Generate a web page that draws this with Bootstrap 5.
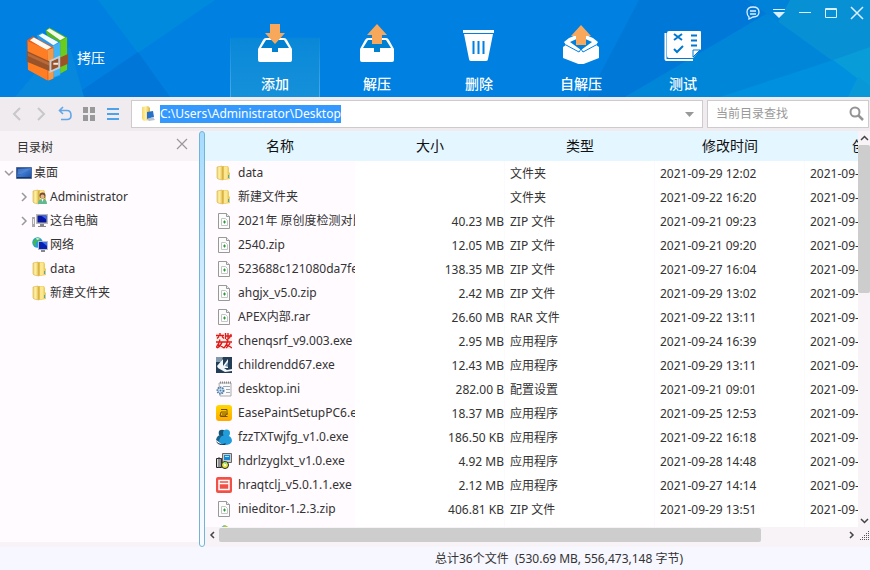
<!DOCTYPE html>
<html lang="zh-CN">
<head>
<meta charset="utf-8">
<meta name="viewport" content="width=device-width, initial-scale=1">
<title>拷压</title>
<link href="https://cdn.jsdelivr.net/npm/bootstrap@5.3.0/dist/css/bootstrap.min.css" rel="stylesheet">
<style>
body{font-family:"Noto Sans","Noto Sans CJK SC",sans-serif;font-size:12px;line-height:24px;color:#333;background:#f7f7ff}
svg{display:block;flex:none}
button{border:0;background:none;padding:0;color:inherit}
.topbar{height:97px;background:#0080e0;color:#fff}
.facets{z-index:0}
.brand{width:230px;padding:26px 0 0 26px;z-index:1}
.brand-name{font-size:14px;line-height:24px;padding-top:20px}
.tools{gap:12px;padding-top:19px;z-index:1}
.tool{width:90px;height:78px;font-size:14px;font-weight:500;line-height:20px;border:solid transparent;border-width:0 1px}
.tool svg{margin:0 auto 10px}
.tool.current{background:linear-gradient(transparent 18px,#0a88d8 20px,#1590da);border-image:linear-gradient(transparent 18px,#45acec) 1}
.wincontrols{gap:12px;padding:6px 6px 0 0;z-index:1;color:#dcefff}
.toolbar{background:#efebef;padding:3px 1px 3px 10px}
.navicons{width:121px;gap:10px}
.field{height:28px;background:#fff;border:1px solid #cecbce}
.field input{border:0;outline:0;background:none;min-width:0;line-height:18px;padding:0;font-size:12px;color:#333}
.address input::selection{background:#3399ff;color:#fff}
.search{width:162px}
.search input::placeholder{color:#999;opacity:1}
.tree{width:199px;background:#fffbff;border-bottom:5px solid #f7f3f7}
.treehead{height:30px;background:#f7f3f7;padding:4px 11px 0 17px}
.treehead button{margin-bottom:8px}
.tree ul{padding:0;margin:0;list-style:none}
.node{height:24px;gap:2px;padding-left:4px}
.node.child{padding-left:20px}
.node .twist{width:10px;height:10px}
.splitter{width:6px;border:1px solid #74b3d8;border-radius:3px;background:linear-gradient(#a5dcff,#d6eeff 40%,#f7fbff)}
.files{background:#fff}
.files table{width:900px;table-layout:fixed;border-collapse:separate;border-spacing:0}
.files th{height:30px;background:#e4f6ff;font-size:14px;font-weight:400;text-align:center;padding:0;color:#111}
.files td{height:24px;line-height:22px;padding:2px 5px 0;white-space:nowrap;overflow:hidden;border-right:1px solid #fcfafc}
.files td:first-child{background:#fffbff;padding:0 0 0 11px;border:0}
.files td:nth-child(2){text-align:right;padding-right:0}
.files td div{gap:6px}
.track{background:#f7f3f7;color:#444}
.vbar{width:12px}
.thumb{background:#cdcdcd;border-radius:2px}
.vbar .thumb{height:148px}
.hbar{height:20px;padding:1px 0 5px 4px}
.hbar .thumb{width:82%}
.status{height:23px;padding-left:50%;line-height:24px;background:#f7f7ff}
</style>
<script src="https://cdn.jsdelivr.net/npm/bootstrap@5.3.0/dist/js/bootstrap.bundle.min.js"></script>
</head>
<body class="d-flex flex-column vh-100 overflow-hidden">
<svg class="position-absolute" width="0" height="0" aria-hidden="true">
<defs>
<linearGradient id="gold"><stop offset="0" stop-color="#f5d66c"/><stop offset=".45" stop-color="#fff0a5"/><stop offset="1" stop-color="#dcb33a"/></linearGradient>
<linearGradient id="scr" x2="1" y2="1"><stop offset="0" stop-color="#173f8f"/><stop offset=".5" stop-color="#3c78cf"/><stop offset="1" stop-color="#1b4c9f"/></linearGradient>
<linearGradient id="amber" x2="0" y2="1"><stop offset="0" stop-color="#ffd800"/><stop offset="1" stop-color="#ffa800"/></linearGradient>
</defs>
<symbol id="folder" viewBox="0 0 16 16"><path d="M1 2l5-1 1 1v13l-5-1-1-1z" fill="url(#gold)" stroke="#d5ae48" stroke-width=".6"/><path d="M6 2l1-1 5 0 1 2v4l1 1v6l-6 1-2-1z" fill="#edcc5c"/><path d="M8 1.500h3.500v12L8 14.500z" fill="#fbe692"/><path d="M6 2l1.500-1v14L6 14z" fill="#d9b347"/><path d="M12.500 10v3" stroke="#36a9e8"/></symbol>
<symbol id="zip" viewBox="0 0 16 16"><path d="M2.500.5h8l3 3v12h-11z" fill="#fcfcfc" stroke="#999"/><path d="M10.500.5v3h3" fill="#eee" stroke="#999"/><path d="M5.500 5.500h4l2 2v5h-6z" fill="#fff" stroke="#c5c5c5"/><path d="M8.500 7.500v3M7 9h3" stroke="#20a030"/></symbol>
<symbol id="desk" viewBox="0 0 16 16"><path d="M.5 2.500h15v11H.5z" fill="url(#scr)" stroke="#526b96"/><path d="M1 12.500h14" stroke="#163565"/><path d="M2 4h12L5 9H2z" fill="#71a6e6" opacity=".4"/></symbol>
<symbol id="user" viewBox="0 0 16 16"><use href="#folder"/><circle cx="10.500" cy="6.500" r="3" fill="#734c32"/><circle cx="10.500" cy="7.500" r="2" fill="#e5b48c"/><path d="M6 15q0-5 4.500-5t4.500 5z" fill="#62b893"/><path d="M9.500 10h2l-1 3z" fill="#fff"/></symbol>
<symbol id="pc" viewBox="0 0 16 16"><path d="M0 4h3v10H0z" fill="#aaa"/><path d="M1 6h1v5H1z" fill="#eee"/><path d="M4 1h12v10H4z" fill="#b8b8b8"/><path d="M5.500 2.500h9v7h-9z" fill="#0716a0"/><path d="M9 2.500h5.500v4z" fill="#3b65ed"/><path d="M8 11h4v2h2v1H6v-1h2z" fill="#888"/></symbol>
<symbol id="net" viewBox="0 0 16 16"><circle cx="5.500" cy="5.500" r="5.200" fill="#269ed3"/><path d="M1 5q3-5 7-4L7 4 4 5v4L1 7z" fill="#43b852"/><path d="M4 1q3 0 4 1L5 3z" fill="#cff3e7"/><path d="M6 4h10v9H6z" fill="#b5bac5"/><path d="M7 5h8v7H7z" fill="#0920b5"/><path d="M10 5h5v4z" fill="#3b6eee"/><path d="M9 13h4v2H9z" fill="#888"/></symbol>
<symbol id="chen" viewBox="0 0 16 16"><path d="M0 0h16v16H0z" fill="#ffeee8"/><path d="M0 2.500h8M4 0v3M1 5.500l2-2M6 3.500l2 2M0 9h8M4 6.500q-1 5-4 8M2 11l6 4M6 9q-1 4-5 6M9 3h7M12 0v6M9.500 0v6M15 1q0 4-5 6M8 9h8M12 7q-1 5-4 8M10 11l6 4M14 10q-1 3-4 5" stroke="#dd1919" stroke-width="1.300" fill="none"/></symbol>
<symbol id="child" viewBox="0 0 16 16"><path d="M0 0h16v16H0z" fill="#233d57"/><path d="M0 0h7L5 5H0z" fill="#8399ac"/><path d="M1 9l6-7v7l5-7v9H8l3 2 5-1v2L9 15l-7-4z" fill="#f2f7fa"/><path d="M9 9l3-4v5z" fill="#6c93b3"/></symbol>
<symbol id="ini" viewBox="0 0 16 16"><path d="M3 2h12v13H4z" fill="#fafafa" stroke="#aaa"/><path d="M4 1.500h11" stroke="#888" stroke-width="2" stroke-dasharray="1 1"/><path d="M7 5.500h7M10 8.500h4M10 11.500h4" stroke="#9ca8b3"/><circle cx="4.500" cy="9.500" r="3" fill="#dceaf4" stroke="#527fab" stroke-width="2" stroke-dasharray="1.500 .7"/><circle cx="4.500" cy="9.500" r="1" fill="#527fab"/></symbol>
<symbol id="ease" viewBox="0 0 16 16"><rect width="16" height="16" rx="3" fill="url(#amber)"/><path d="M5 4.500h6v4L9 11H4l1-4h5M6 9h6M4.500 11.500h7" stroke="#704f08" fill="none"/></symbol>
<symbol id="people" viewBox="0 0 16 16"><circle cx="6" cy="4" r="3.300" fill="#135478"/><path d="M0 11q1-5 5-5l4 5-3 4z" fill="#17628a"/><circle cx="10.500" cy="4" r="3.500" fill="#219ed9"/><path d="M3 12q1-6 7-6 6 1 6 6-1 4-7 4-5-1-6-4z" fill="#229bdc"/><path d="M0 12q4 5 10 2l-1 2q-7 1-9-4z" fill="#123d56"/></symbol>
<symbol id="setup" viewBox="0 0 16 16"><path d="M6.500.5h9v9h-9z" fill="#ccc" stroke="#666"/><path d="M8 2h6v5H8z" fill="#1689d5"/><path d="M9 3h4v1H9z" fill="#a4e5fc"/><path d="M.5 5.500h5v9h-5z" fill="#ddd" stroke="#222"/><path d="M3 4v11M5 5v9" stroke="#444"/><circle cx="9" cy="12" r="3.500" fill="#e5e845" stroke="#222"/><path d="M9 8.500l2 1-2 2z" fill="#4ee0be"/><circle cx="9" cy="12" r="1" fill="#fff"/></symbol>
<symbol id="redwin" viewBox="0 0 16 16"><rect width="16" height="16" rx="2" fill="#f24f47"/><path d="M3 3.500h10v9H3zM3 6.500h10" fill="none" stroke="#fff" stroke-width="1.500"/></symbol>
<symbol id="stack" viewBox="0 0 16 16"><path d="M3 4l5-4 6 4v10H3z" fill="#5fbbd5"/><path d="M6 3l3-3 5 3v3z" fill="#a9c83c"/></symbol>
<symbol id="more" viewBox="0 0 10 10"><path d="M2 1l4 4-4 4" fill="none" stroke="#999" stroke-width="1.500"/></symbol>
<symbol id="tray" viewBox="0 0 36 42"><path d="M9 16h18q2 0 3 2l5 9v11q0 2-2 2H3q-2 0-2-2V27l5-9q1-2 3-2z" fill="#fff"/><path d="M9 18h18l5 8H21v4h-6v-4H4z" fill="#0080d0"/></symbol>
</svg>

<header class="topbar d-flex position-relative flex-shrink-0">
<svg class="facets position-absolute top-0 start-0 w-100 h-100" viewBox="0 0 870 97" preserveAspectRatio="none" aria-hidden="true">
<path d="M98 0l40 53L215 0z" fill="#008ade"/><path d="M138 52L72 97h98z" fill="#0076d8"/><path d="M15 97l35-42 20-8 14 50z" fill="#0788dc"/>
<path d="M639 0h151L625 97h-37z" fill="#0078d8"/><path d="M710 47L790 0h80v97H625z" fill="#0086d8"/><path d="M748 0h122v88z" fill="#0890d5"/><path d="M748 0h42l-12 22z" fill="#0082d8"/><path d="M720 97l113-37 37 28v9z" fill="#0090e0"/><path d="M833 60l37-13v41z" fill="#089cd8"/><path d="M848 97l10-20 12 9v11z" fill="#0898d8"/>
</svg>
<div class="brand d-flex align-items-start position-relative">
<svg class="me-2" width="43" height="56" viewBox="0 0 44 56" aria-hidden="true">
<path d="M20 4l4-3 18 10v33l-7 4z" fill="#55b71b"/><path d="M21 4l3-2 16 9-5 3z" fill="#f5faed"/><path d="M35 15l7-4v33l-7 4z" fill="#6bcc1d"/>
<path d="M11 9l5-3 19 10v34l-8 3z" fill="#2b99e5"/><path d="M13 9l4-2 16 9-5 3z" fill="#f4fbff"/><path d="M27 20l8-4v33l-8 3z" fill="#42b4f3"/>
<path d="M1 14l6-4 21 11v32l-5 2L2 44z" fill="#ec5b1a"/><path d="M4 14l4-3 18 10-5 3z" fill="#fffaf2"/><path d="M2 15l20 9v31L2 44z" fill="#ff7e24"/><path d="M22 24l6-2v31l-5 2z" fill="#f39a49"/>
<path d="M1 25l24 11 18-8v10l-18 8L1 36z" fill="#9a5228"/><path d="M2 27l22 10v3L2 30z" fill="#b96a3b"/><path d="M25 35l9-4v11l-9 4z" fill="none" stroke="#c9ccd0" stroke-width="2"/><path d="M28 38h5" stroke="#eee" stroke-width="2"/>
</svg>
<span class="brand-name">拷压</span>
</div>
<nav class="tools d-flex position-relative">
<button class="tool current" type="button"><svg width="36" height="42" viewBox="0 0 36 42"><use href="#tray"/><path d="M13 2h10v9h5L18 22 8 11h5z" fill="#f7a85a"/></svg>添加</button>
<button class="tool" type="button"><svg width="36" height="42" viewBox="0 0 36 42"><use href="#tray"/><path d="M18 2l10 11h-5v9H13v-9H8z" fill="#f7a85a"/></svg>解压</button>
<button class="tool" type="button"><svg width="36" height="42" viewBox="0 0 36 42"><path d="M2 8h31v3H2zM3 12h29l-5 25q0 2-2 2H10q-2 0-2-2z" fill="#fff"/><path d="M12.500 19v13M17.500 19v13M22.500 19v13" stroke="#0080e0" stroke-width="2"/></svg>删除</button>
<button class="tool" type="button"><svg width="38" height="42" viewBox="0 0 38 42"><path d="M7 16l12-5 12 5 5 4-2 3 3 2v11l-18 7L1 36V25l3-2-2-3z" fill="#fff"/><path d="M19 15l11 5-11 8-11-8z" fill="#0080d8"/><path d="M4 23l13 7 2-3 2 3 13-7" fill="none" stroke="#0080e0"/><path d="M19 3l10 11h-5v9H14v-9H9z" fill="#f7a85a"/></svg>自解压</button>
<button class="tool" type="button"><svg width="38" height="42" viewBox="0 0 38 42"><path d="M1.500 11v26q0 1 1 1H29" fill="none" stroke="#fff" stroke-width="2"/><path d="M5 9h31q1 0 1 1v17l-8 9H5q-2 0-2-2V11q0-2 2-2z" fill="#fff"/><path d="M10 12l8 6M18 12l-8 6M10 27l3 3 6-6M27 13.500h6M27 18.500h6M27 23.500h6" fill="none" stroke="#0078d0" stroke-width="2"/><path d="M29 35v-7h7z" fill="#fff" stroke="#0078d0"/></svg>测试</button>
</nav>
<div class="wincontrols d-flex align-items-start ms-auto position-relative">
<button type="button" aria-label="反馈"><svg width="14" height="14" viewBox="0 0 14 14"><path d="M3 11Q1 9 1 6q0-5 6-5t6 5-6 5l-4 2zM4 5h6M4 8h6" fill="none" stroke="currentColor" stroke-width="1.300"/></svg></button>
<button type="button" aria-label="菜单"><svg width="14" height="14" viewBox="0 0 14 14"><path d="M1 3h12v1H1zM1 6h12l-6 6z" fill="currentColor"/></svg></button>
<button type="button" aria-label="最小化"><svg width="14" height="14" viewBox="0 0 14 14"><path d="M1 6.500h12" stroke="currentColor"/></svg></button>
<button type="button" aria-label="最大化"><svg width="14" height="14" viewBox="0 0 14 14"><path d="M1.500 2.500h11v9h-11zM1 3.500h12" fill="none" stroke="currentColor"/></svg></button>
<button type="button" aria-label="关闭"><svg width="14" height="14" viewBox="0 0 14 14"><path d="M1 1l12 12M13 1L1 13" stroke="currentColor" stroke-width="1.500"/></svg></button>
</div>
</header>

<div class="toolbar d-flex align-items-center flex-shrink-0">
<div class="navicons d-flex align-items-center">
<button type="button" aria-label="后退"><svg width="14" height="16" viewBox="0 0 14 16"><path d="M10 2L4 8l6 6" fill="none" stroke="#c8c8c8" stroke-width="2"/></svg></button>
<button type="button" aria-label="前进"><svg width="14" height="16" viewBox="0 0 14 16"><path d="M4 2l6 6-6 6" fill="none" stroke="#c8c8c8" stroke-width="2"/></svg></button>
<button type="button" aria-label="返回上级"><svg width="14" height="16" viewBox="0 0 14 16"><path d="M5 1L1.500 4.500 5 8M2 4.500h7q4 0 4 5 0 4-4 4H3" fill="none" stroke="#62a5e8" stroke-width="1.600"/></svg></button>
<button type="button" aria-label="图标视图"><svg width="14" height="16" viewBox="0 0 14 16"><path d="M1 1h5v6H1zM8 1h5v6H8zM1 9h5v6H1zM8 9h5v6H8z" fill="#999"/></svg></button>
<button type="button" aria-label="列表视图"><svg width="14" height="16" viewBox="0 0 14 16"><path d="M1 3h12M1 8h12M1 13h12" stroke="#4ba3ec" stroke-width="2"/></svg></button>
</div>
<div class="field address d-flex align-items-center flex-grow-1">
<svg class="ms-2 me-1" width="16" height="16" viewBox="0 0 16 16" aria-hidden="true"><path d="M2 1l6-1 2 2v12l-6 1-2-2z" fill="url(#gold)"/><path d="M7 6l6-1 1 6-7 2z" fill="#2871ca"/><path d="M7 13l6-2 2 3-6 1z" fill="#b8c3d1"/></svg>
<input id="path" class="flex-grow-1" type="text" aria-label="地址" value="C:\Users\Administrator\Desktop">
<button type="button" class="me-2" aria-label="展开地址"><svg width="9" height="6" viewBox="0 0 9 6"><path d="M0 1h9L4.500 6z" fill="#999"/></svg></button>
</div>
<div class="field search d-flex align-items-center ms-1 ps-2 pe-1">
<input class="flex-grow-1" type="text" aria-label="查找" placeholder="当前目录查找">
<button type="button" aria-label="开始查找"><svg width="15" height="16" viewBox="0 0 15 16"><circle cx="6" cy="6" r="4.500" fill="none" stroke="#949494" stroke-width="2"/><path d="M9 9l5 5" stroke="#949494" stroke-width="2.500"/></svg></button>
</div>
</div>

<main class="d-flex flex-grow-1 overflow-hidden">
<aside class="tree flex-shrink-0">
<div class="treehead d-flex align-items-center justify-content-between">目录树<button type="button" aria-label="关闭目录树"><svg width="12" height="12" viewBox="0 0 12 12"><path d="M1 1l10 10M11 1L1 11" stroke="#999" stroke-width="1.200"/></svg></button></div>
<ul>
<li class="node d-flex align-items-center"><button class="twist" type="button" aria-label="折叠"><svg width="10" height="10" viewBox="0 0 10 10"><path d="M1 3l4 4 4-4" fill="none" stroke="#999" stroke-width="1.500"/></svg></button><svg width="16" height="16"><use href="#desk"/></svg><span>桌面</span></li>
<li class="node child d-flex align-items-center"><button class="twist" type="button" aria-label="展开"><svg width="10" height="10"><use href="#more"/></svg></button><svg width="16" height="16"><use href="#user"/></svg><span>Administrator</span></li>
<li class="node child d-flex align-items-center"><button class="twist" type="button" aria-label="展开"><svg width="10" height="10"><use href="#more"/></svg></button><svg width="16" height="16"><use href="#pc"/></svg><span>这台电脑</span></li>
<li class="node child d-flex align-items-center"><i class="twist"></i><svg width="16" height="16"><use href="#net"/></svg><span>网络</span></li>
<li class="node child d-flex align-items-center"><i class="twist"></i><svg width="16" height="16"><use href="#folder"/></svg><span>data</span></li>
<li class="node child d-flex align-items-center"><i class="twist"></i><svg width="16" height="16"><use href="#folder"/></svg><span>新建文件夹</span></li>
</ul>
</aside>
<div class="splitter flex-shrink-0"></div>
<section class="files d-flex flex-column flex-grow-1 overflow-hidden">
<div class="d-flex flex-grow-1 overflow-hidden">
<div class="flex-grow-1 overflow-hidden">
<table>
<thead><tr><th>名称</th><th>大小</th><th>类型</th><th>修改时间</th><th>创建时间</th><th>属性</th></tr></thead>
<tbody>
<tr><td><div class="d-flex align-items-center"><svg width="16" height="16"><use href="#folder"/></svg><span>data</span></div></td><td></td><td>文件夹</td><td>2021-09-29 12:02</td><td>2021-09-29 12:02</td><td></td></tr>
<tr><td><div class="d-flex align-items-center"><svg width="16" height="16"><use href="#folder"/></svg><span>新建文件夹</span></div></td><td></td><td>文件夹</td><td>2021-09-22 16:20</td><td>2021-09-22 16:20</td><td></td></tr>
<tr><td><div class="d-flex align-items-center"><svg width="16" height="16"><use href="#zip"/></svg><span>2021年 原创度检测对比</span></div></td><td>40.23 MB</td><td>ZIP 文件</td><td>2021-09-21 09:23</td><td>2021-09-21 09:23</td><td></td></tr>
<tr><td><div class="d-flex align-items-center"><svg width="16" height="16"><use href="#zip"/></svg><span>2540.zip</span></div></td><td>12.05 MB</td><td>ZIP 文件</td><td>2021-09-21 09:20</td><td>2021-09-21 09:20</td><td></td></tr>
<tr><td><div class="d-flex align-items-center"><svg width="16" height="16"><use href="#zip"/></svg><span>523688c121080da7fe.zip</span></div></td><td>138.35 MB</td><td>ZIP 文件</td><td>2021-09-27 16:04</td><td>2021-09-27 16:04</td><td></td></tr>
<tr><td><div class="d-flex align-items-center"><svg width="16" height="16"><use href="#zip"/></svg><span>ahgjx_v5.0.zip</span></div></td><td>2.42 MB</td><td>ZIP 文件</td><td>2021-09-29 13:02</td><td>2021-09-29 13:02</td><td></td></tr>
<tr><td><div class="d-flex align-items-center"><svg width="16" height="16"><use href="#zip"/></svg><span>APEX内部.rar</span></div></td><td>26.60 MB</td><td>RAR 文件</td><td>2021-09-22 13:11</td><td>2021-09-22 13:11</td><td></td></tr>
<tr><td><div class="d-flex align-items-center"><svg width="16" height="16"><use href="#chen"/></svg><span>chenqsrf_v9.003.exe</span></div></td><td>2.95 MB</td><td>应用程序</td><td>2021-09-24 16:39</td><td>2021-09-24 16:39</td><td></td></tr>
<tr><td><div class="d-flex align-items-center"><svg width="16" height="16"><use href="#child"/></svg><span>childrendd67.exe</span></div></td><td>12.43 MB</td><td>应用程序</td><td>2021-09-29 13:11</td><td>2021-09-29 13:11</td><td></td></tr>
<tr><td><div class="d-flex align-items-center"><svg width="16" height="16"><use href="#ini"/></svg><span>desktop.ini</span></div></td><td>282.00 B</td><td>配置设置</td><td>2021-09-21 09:01</td><td>2021-09-21 09:01</td><td></td></tr>
<tr><td><div class="d-flex align-items-center"><svg width="16" height="16"><use href="#ease"/></svg><span>EasePaintSetupPC6.exe</span></div></td><td>18.37 MB</td><td>应用程序</td><td>2021-09-25 12:53</td><td>2021-09-25 12:53</td><td></td></tr>
<tr><td><div class="d-flex align-items-center"><svg width="16" height="16"><use href="#people"/></svg><span>fzzTXTwjfg_v1.0.exe</span></div></td><td>186.50 KB</td><td>应用程序</td><td>2021-09-22 16:18</td><td>2021-09-22 16:18</td><td></td></tr>
<tr><td><div class="d-flex align-items-center"><svg width="16" height="16"><use href="#setup"/></svg><span>hdrlzyglxt_v1.0.exe</span></div></td><td>4.92 MB</td><td>应用程序</td><td>2021-09-28 14:48</td><td>2021-09-28 14:48</td><td></td></tr>
<tr><td><div class="d-flex align-items-center"><svg width="16" height="16"><use href="#redwin"/></svg><span>hraqtclj_v5.0.1.1.exe</span></div></td><td>2.12 MB</td><td>应用程序</td><td>2021-09-27 14:14</td><td>2021-09-27 14:14</td><td></td></tr>
<tr><td><div class="d-flex align-items-center"><svg width="16" height="16"><use href="#zip"/></svg><span>inieditor-1.2.3.zip</span></div></td><td>406.81 KB</td><td>ZIP 文件</td><td>2021-09-29 13:51</td><td>2021-09-29 13:51</td><td></td></tr>
<tr><td><div class="d-flex align-items-center"><svg width="16" height="16"><use href="#stack"/></svg><span>scand.exe</span></div></td><td></td><td></td><td></td><td></td><td></td></tr>
</tbody>
</table>
</div>
<div class="track vbar d-flex flex-column align-items-center flex-shrink-0">
<button type="button" aria-label="向上滚动"><svg width="12" height="14" viewBox="0 0 12 14"><path d="M3 9l3.500-3.500L10 9" fill="none" stroke="currentColor" stroke-width="1.500"/></svg></button>
<div class="thumb w-100"></div>
<button class="mt-auto" type="button" aria-label="向下滚动"><svg width="12" height="14" viewBox="0 0 12 14"><path d="M3 6l3.500 3.500L10 6" fill="none" stroke="currentColor" stroke-width="1.500"/></svg></button>
</div>
</div>
<div class="track hbar d-flex flex-shrink-0">
<button class="me-1" type="button" aria-label="向左滚动"><svg width="6" height="14" viewBox="0 0 6 14"><path d="M5 4L2 7l3 3" fill="none" stroke="currentColor" stroke-width="1.500"/></svg></button>
<div class="thumb"></div>
<button class="ms-auto me-1" type="button" aria-label="向右滚动"><svg width="9" height="14" viewBox="0 0 9 14"><path d="M3 4l3 3-3 3" fill="none" stroke="currentColor" stroke-width="1.500"/></svg></button>
<svg width="10" height="14" viewBox="0 0 10 14" aria-hidden="true"><path d="M8 3.500h2M6 5.500h4M4 7.500h6M2 9.500h8M0 11.500h10" stroke="#555" stroke-dasharray="1 1"/></svg>
</div>
</section>
</main>
<footer class="status flex-shrink-0">总计36个文件&nbsp; (530.69 MB, 556,473,148 字节)</footer>
<script>
const path = document.getElementById("path");
path.focus();
path.select();
</script>
</body>
</html>
